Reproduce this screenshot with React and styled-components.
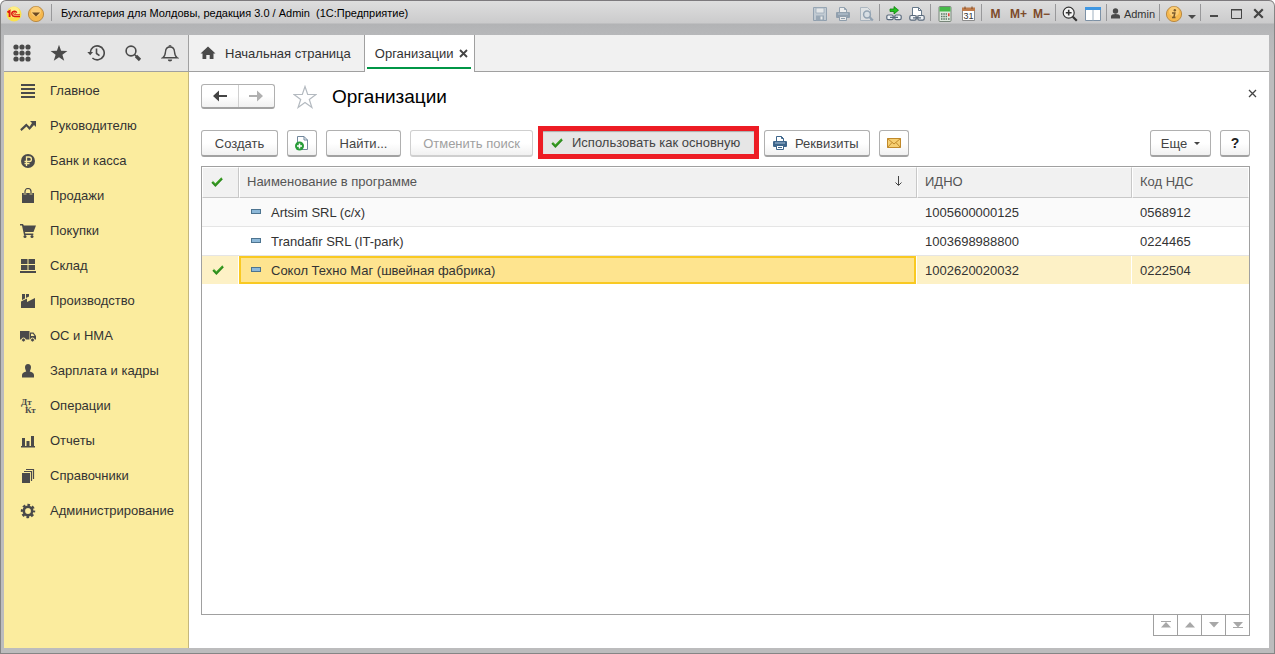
import React, { useState } from 'react'
import styled, { createGlobalStyle, css } from 'styled-components'

const GlobalStyle = createGlobalStyle`
  * { box-sizing: border-box; }
  body {
    margin: 0;
    background: white;
    font-family: "Liberation Sans", Arial, sans-serif;
    font-size: 13px;
    color: #333;
  }
  button {
    font: inherit;
    color: inherit;
    margin: 0;
    padding: 0;
    border: 0;
    background: none;
  }
  svg { display: block; flex: none; }
`

const Window = styled.div`
  min-height: 100vh;
  display: flex;
  flex-direction: column;
  padding: 0 5px 5px 3px;
  border: 1px solid #858585;
  border-top: 1px solid #7d7a7d;
  border-radius: 6px 6px 0 0;
  background: linear-gradient(#dedede, #cbcbcc 22px, #b2b3b5 23px, #b7b8ba 34px, #bcbcbd 60px);
  overflow: hidden;
`

const TitleBar = styled.header`
  height: 34px;
  display: flex;
  align-items: flex-start;
  padding-top: 1px;
`

const Sep = styled.i`
  width: 1px;
  height: 17px;
  margin: 2px;
  background: #98989a;
`

const BarButton = styled.button`
  width: ${ props => props.$w || 23 }px;
  height: 23px;
  display: flex;
  align-items: center;
  justify-content: center;
  gap: 4px;
  opacity: ${ props => props.disabled ? 0.55 : 1 };
  font-size: 11px;
`

const Memory = styled(BarButton)`
  color: #7d4a2a;
  font-size: 12px;
  font-weight: bold;
`

const WindowTitle = styled.h1`
  flex: 1;
  margin: 0 0 0 7px;
  font-size: 11px;
  line-height: 23px;
  font-weight: normal;
  color: #000;
  white-space: pre;
  overflow: hidden;
`

const TopStrip = styled.div`
  height: 37px;
  display: flex;
  background: #f1f1f1;
  border-bottom: 1px solid #a0a0a0;
`

const Tools = styled.div`
  width: 185px;
  display: flex;
  background: #e6e6e6;
  border-right: 1px solid #a0a0a0;
`

const Tool = styled.button`
  flex: 1;
  display: flex;
  align-items: center;
  justify-content: center;
`

const Tab = styled.button`
  display: flex;
  align-items: center;
  gap: 9px;
  padding: 0 13px 0 11px;
  border-right: 1px solid #a0a0a0;
  white-space: nowrap;
  ${ props => props.$active && css`
    height: 37px;
    gap: 6px;
    padding: 0 6px 0 10px;
    background: linear-gradient(#009646, #009646) 2px 32px / calc(100% - 5px) 2px no-repeat white;
  ` }
`

const Body = styled.div`
  flex: 1;
  display: flex;
  background: white;
`

const Sidebar = styled.nav`
  width: 185px;
  padding-top: 1px;
  background: #fbec9e;
  border-right: 1px solid #c5b77c;
`

const Section = styled.a`
  height: 35px;
  display: flex;
  align-items: center;
  gap: 14px;
  padding-left: 16px;
  color: #333;
  text-decoration: none;
  white-space: nowrap;
`

const Main = styled.main`
  flex: 1;
  min-width: 0;
  display: flex;
  flex-direction: column;
  padding: 12px 19px 12px 12px;
`

const PageHead = styled.div`
  height: 25px;
  display: flex;
  align-items: center;
`

const face = css`
  border: 1px solid #b0b0b0;
  border-bottom: 2px solid #a2a2a2;
  border-radius: 3px;
  background: linear-gradient(#fff 50%, #f1f1f1);
`

const NavButtons = styled.div`
  ${ face }
  width: 74px;
  height: 25px;
  display: flex;
  button {
    flex: 1;
    display: flex;
    align-items: center;
    justify-content: center;
  }
  button + button { border-left: 1px solid #d0d0d0; }
`

const Favourite = styled.button`
  margin: 0 15px 0 18px;
`

const PageTitle = styled.h2`
  flex: 1;
  margin: 0;
  font-size: 19px;
  line-height: 25px;
  font-weight: normal;
  color: #000;
`

const ClosePage = styled.button`
  width: 16px;
  height: 16px;
  margin: 0 -10px 6px 0;
  display: flex;
  align-items: center;
  justify-content: center;
`

const Commands = styled.div`
  display: flex;
  align-items: center;
  gap: 9px;
  margin: 21px 0 9px;
`

const Button = styled.button`
  ${ face }
  width: ${ props => props.$w }px;
  height: 27px;
  display: flex;
  align-items: center;
  justify-content: ${ props => props.$start ? 'flex-start' : 'center' };
  gap: 7px;
  padding-left: ${ props => props.$start ? 7 : 0 }px;
  color: #444;
  white-space: nowrap;
  &:disabled {
    color: #a0a0a0;
    border-color: #cfcfcf;
  }
  b {
    font-size: 14px;
    color: #222;
  }
`

const MainButton = styled(Button)`
  align-self: flex-start;
  height: 23px;
  gap: 9px;
  margin: 1px;
  padding-left: 8px;
  border: 0;
  border-radius: 0;
  background: #e6e6e6;
  box-shadow: 0 0 0 5px #ed1c24, inset 0 1px 1px #aaa;
`

const Spacer = styled.div`
  flex: 1;
`

const List = styled.div`
  flex: 1;
  border: 1px solid #a0a0a0;
`

const Table = styled.table`
  width: 100%;
  table-layout: fixed;
  border-collapse: separate;
  border-spacing: 0;
  th, td {
    padding: 0 8px;
    text-align: left;
    font-weight: normal;
    white-space: nowrap;
  }
  th {
    height: 31px;
    color: #555;
    background: #f1f1f1;
    border: 1px solid white;
    border-right: 1px solid #c8c8c8;
    border-bottom: 1px solid #c8c8c8;
    padding: 0 7px 2px;
  }
  th:last-child { border-right-color: white; }
  th:first-child { padding-left: 8px; }
  td:first-child { padding-left: 10px; }
`

const Row = styled.tr`
  td {
    height: 29px;
    background: ${ props => props.$odd ? '#fafafa' : 'white' };
    border-bottom: 1px solid #e5e5e5;
  }
  ${ props => props.$selected && css`
    td {
      background: #fdf1c6;
      background-clip: padding-box;
      border-bottom-color: white;
      border-right: 1px solid white;
    }
    td:last-child { border-right: 0; }
    td:nth-child(2) {
      background: #fee48f;
      background-clip: padding-box;
      box-shadow: inset 0 0 0 2px #f9c922;
    }
  ` }
`

const Cell = styled.div`
  display: flex;
  align-items: center;
  gap: 10px;
  padding-left: 4px;
`

const HeadCell = styled.div`
  display: flex;
  align-items: center;
  justify-content: space-between;
  padding-right: 6px;
`

const Pager = styled.div`
  align-self: flex-end;
  display: flex;
  border: 1px solid #a0a0a0;
  border-top: 0;
  button {
    width: 24px;
    height: 20px;
    display: flex;
    align-items: center;
    justify-content: center;
  }
  button:first-child { width: 23px; }
  button + button { border-left: 1px solid #a0a0a0; }
`

const Svg = ({ size = 16, w, h, children, ...rest }) => (
  <svg width={w || size} height={h || size} viewBox={`0 0 ${w || size} ${h || size}`} fill="#4a4a4a" aria-hidden="true" {...rest}>
    {children}
  </svg>
)

const Check = () => (
  <Svg w={12} h={12} fill="none">
    <path d="M1.2 6 4.4 9.2 11 2.4" stroke="#2c8b1c" strokeWidth="2.4"/>
    <path d="M1.6 5.2 4.4 7.9 10.6 1.8" stroke="#5cc23c" strokeWidth="0.8"/>
  </Svg>
)

const Dash = () => (
  <Svg w={10} h={8}>
    <rect x="0.5" y="1.5" width="9" height="4" fill="#8db8d8" stroke="#4d7490"/>
  </Svg>
)

const Logo = () => (
  <svg width="16" height="16" viewBox="0 0 16 16" aria-hidden="true">
    <circle cx="8" cy="8" r="7.5" fill="#fbe04a"/>
    <circle cx="8" cy="6" r="5.5" fill="#fff3a0" opacity="0.7"/>
    <g fill="none" stroke="#dd1a12">
      <path d="M1.5 6.4 3.6 5v6" strokeWidth="1.9"/>
      <path d="M10.8 6.6A2.7 2.5 0 1 0 8.6 10.4H14" strokeWidth="1.5"/>
      <path d="M9.6 7.6A1 1 0 1 0 8.6 8.7H14" strokeWidth="0.9"/>
    </g>
  </svg>
)

const Round = ({ children }) => (
  <Svg size={18}>
    <circle cx="9" cy="9" r="7.6" fill="#f5b84e" stroke="#b98a45"/>
    <circle cx="9" cy="6.5" r="5" fill="#ffd88e" opacity="0.6"/>
    {children}
  </Svg>
)

const Floppy = () => (
  <Svg>
    <path d="M1.5 1.5h13v13h-13z" fill="#b4c4d2" stroke="#5f7a94"/>
    <path d="M4 2h8v5H4z" fill="#f0f4f7" stroke="#6f8aa2" strokeWidth="0.8"/>
    <path d="M4 9.5h8v5H4z" fill="#6f89a0"/>
    <path d="M8.500 10.500h2v3h-2z" fill="white"/>
  </Svg>
)

const Printer = ({ color = '#3d658b' }) => (
  <Svg>
    <path d="M4.5 7V1.5h5l2 2V7" fill="white" stroke={color}/>
    <path d="M9.5 1.5v2h2" fill="none" stroke={color}/>
    <rect x="1" y="6" width="14" height="6" rx="1" fill={color}/>
    <path d="M3 8h10" stroke="#a9c3da"/>
    <path d="M4.5 10.5h7v4h-7z" fill="white" stroke={color}/>
    <path d="M6 12.5h4" stroke={color}/>
  </Svg>
)

const Preview = () => (
  <Svg>
    <path d="M2.5 1.5h7l3 3v10h-10z" fill="#e6ebef" stroke="#8a9dae"/>
    <circle cx="9" cy="8.5" r="3.4" fill="#dce8f2" stroke="#5f7d99" strokeWidth="1.5"/>
    <path d="m11.5 11 3.3 3.6" stroke="#5f7d99" strokeWidth="2.2"/>
  </Svg>
)

const Chain = ({ y = 9 }) => (
  <g fill="#eef1f4" stroke="#5a6a7c" strokeWidth="1.2">
    <rect x="0.8" y={y} width="6.4" height="4.6" rx="1.4"/>
    <rect x="8.8" y={y} width="6.4" height="4.6" rx="1.4"/>
    <path d={`M4 ${y + 2.3}h8`}/>
  </g>
)

const LinkGo = () => (
  <Svg>
    <Chain/>
    <path d="M4 3h4V.5L12.5 4.2 8 8V5.5H4z" fill="#23c41e" stroke="#11820f" strokeWidth="0.8"/>
  </Svg>
)

const LinkDoc = () => (
  <Svg>
    <path d="M3.5 9V1.5h6l3 3V9" fill="white" stroke="#66788a"/>
    <path d="M9.5 1.5v3h3" fill="none" stroke="#66788a"/>
    <Chain y={9.5}/>
  </Svg>
)

const Calc = () => (
  <Svg>
    <rect x="2" y="0.5" width="12" height="15" rx="1" fill="#dfe9df" stroke="#78867a"/>
    <path d="M2.5 1h11v4.5h-11z" fill="#46b948"/>
    <path d="M4 8h6M4 10.5h6M4 13h6" stroke="#5b7563" strokeWidth="1.5" strokeDasharray="1.5 0.8"/>
    <path d="M11 7.2h1.6v3H11z" fill="#e04638"/>
    <path d="M11 12.2h1.6v1.6H11z" fill="#5b7563"/>
  </Svg>
)

const Calendar = () => (
  <Svg>
    <path d="M2.5 2.5h12v12h-12z" fill="white" stroke="#8c8c8c"/>
    <path d="M2 1.5h13v3.500H2z" fill="#bf7a48"/>
    <path d="M5 .5v2.5M12 .5v2.5" stroke="#7a4825"/>
    <text x="8.5" y="13" fontSize="9" textAnchor="middle" fill="#333">31</text>
  </Svg>
)

const Magnifier = () => (
  <Svg fill="none" stroke="#333">
    <circle cx="6.7" cy="6.7" r="5.5" fill="#f4f4f4" strokeWidth="1.2"/>
    <path d="M3.8 6.7h5.8M6.7 3.8v5.8" strokeWidth="1.6"/>
    <path d="m10.8 10.8 4 4" strokeWidth="2.2"/>
  </Svg>
)

const Panels = () => (
  <Svg>
    <path d="M.5 1.5h15v13H.5z" fill="white" stroke="#7d91a5"/>
    <path d="M0 1h16v3H0z" fill="#3f97e2"/>
    <path d="M8 4v10.5" stroke="#9fb0bf"/>
  </Svg>
)

const User = () => (
  <Svg w={9} h={11}>
    <circle cx="4.5" cy="3" r="2.7"/>
    <path d="M0 10.5V8.3C0 6.8 2 6 4.5 6S9 6.8 9 8.3v2.2z"/>
  </Svg>
)

const Apps = () => (
  <Svg size={18}>
    {[3, 9, 15].map(y => [3, 9, 15].map(x => <circle key={`${x}-${y}`} cx={x} cy={y} r="2.6"/>))}
  </Svg>
)

const Star = () => (
  <Svg size={18}>
    <path d="m9 .8 2.1 5.9 6.3.2-5 3.8 1.8 6L9 13.2l-5.2 3.5 1.800-6-5-3.800 6.300-.2z"/>
  </Svg>
)

const History = () => (
  <Svg size={18} fill="none" stroke="#4a4a4a" strokeWidth="1.6">
    <path d="M3.2 9a7 7 0 1 1 2.2 5"/>
    <path d="M.3 8h5.8L3.2 11.2z" fill="#4a4a4a" stroke="none"/>
    <path d="M9.5 4.5v5l3 2.2"/>
  </Svg>
)

const Search = () => (
  <Svg size={18} fill="none" stroke="#4a4a4a">
    <circle cx="7" cy="7" r="4.9" strokeWidth="1.6"/>
    <path d="m10.8 10.8 2 2" strokeWidth="1.6"/>
    <path d="m12 12 4 4" strokeWidth="3.2"/>
  </Svg>
)

const Bell = () => (
  <Svg size={18} fill="none" stroke="#4a4a4a" strokeWidth="1.4">
    <path d="M1.8 13.7c2.400-1.700 2.500-3.200 2.700-6C4.700 4.600 6.300 3 9 3s4.300 1.600 4.500 4.700c.2 2.800.3 4.300 2.700 6z"/>
    <path d="M8 2.600a1 1 0 0 1 2 0"/>
    <path d="M6.800 15.500h4.400a2.200 2 0 0 1-4.400 0z" fill="#4a4a4a" stroke="none"/>
  </Svg>
)

const Home = () => (
  <Svg>
    <path d="m8 1.5 7.5 7h-2V14H9.7v-4H6.3v4H2.5V8.5h-2z"/>
  </Svg>
)

const CloseIcon = ({ size = 9, width = 1.3 }) => (
  <svg width={size} height={size} viewBox="0 0 9 9" aria-hidden="true">
    <path d="m1 1 7 7M8 1 1 8" stroke="#444" strokeWidth={width}/>
  </svg>
)

const BigStar = () => (
  <Svg size={24} fill="white" stroke="#b4bac0" strokeWidth="1.2">
    <path d="m12 1.5 2.7 8H23l-6.700 5 2.600 8-6.900-4.900-6.900 4.900 2.600-8L1 9.500h8.300z"/>
  </Svg>
)

const Arrow = ({ color, flip }) => (
  <Svg w={14} h={12} fill={color}>
    <path d={flip ? 'M14 6 8 .5V5H0v2h8v4.5z' : 'M0 6 6 .5V5h8v2H6v4.5z'}/>
  </Svg>
)

const NewDoc = () => (
  <Svg>
    <path d="M3.5 1.5H10L13.5 5v9.5h-10z" fill="white" stroke="#71879c"/>
    <path d="M10 1.5V5h3.5" fill="none" stroke="#71879c"/>
    <circle cx="5.500" cy="11" r="4.500" fill="#279c38"/>
    <path d="M3 11h5M5.5 8.5v5" stroke="white" strokeWidth="1.5"/>
  </Svg>
)

const Mail = () => (
  <Svg w={14} h={10}>
    <path d="M.5.5h13v9H.5z" fill="#f6cf72" stroke="#c0892b"/>
    <path d="M.5.5 7 6 13.5.5M.5 9.5l4.5-5M13.5 9.5 9 4.5" fill="none" stroke="#c0892b"/>
  </Svg>
)

const Triangle = ({ up, bar }) => (
  <Svg w={10} h={8} fill="#a8a8a8">
    <path d={up ? 'M5 1 0 6.500h10z' : 'M5 6.500 0 1h10z'}/>
    {bar && <rect x="0" y={up ? 0 : 6} width="10" height="1"/>}
  </Svg>
)

const Caret = () => (
  <Svg w={6} h={3} fill="#444"><path d="M0 0h6L3 3z"/></Svg>
)

const sections = [
  ['Главное', <path d="M1 1h14v2H1zM1 5h14v2H1zM1 9h14v2H1zM1 13h14v2H1z"/>],
  ['Руководителю', <path d="M10 3h6v6l-2-2-4.5 5-3-3.5-5 4.500-1.300-1.700 6.100-5.800 3.200 3.200L12 5z"/>],
  ['Банк и касса', <>
    <circle cx="8" cy="8" r="7"/>
    <path d="M6.5 13V4h2.7a2.2 2.2 0 0 1 0 4.500H4.500M4.500 10.700h5" fill="none" stroke="#fbec9e" strokeWidth="1.3"/>
  </>],
  ['Продажи', <>
    <path d="M2 5h12v10H2z"/>
    <path d="M5 7V4a3 3 0 0 1 6 0v3" fill="none" stroke="#fbec9e" strokeWidth="2.4"/>
    <path d="M5 7V3.500a3 3 0 0 1 6 0V7" fill="none" stroke="#4a4a4a" strokeWidth="1.2"/>
  </>],
  ['Покупки', <>
    <path d="M0 1h3l.8 1.500H16L13.500 9H5l.3 1.500h8V12H4L2 2.500H0z"/>
    <circle cx="5" cy="13.500" r="1.500"/>
    <circle cx="12" cy="13.500" r="1.500"/>
  </>],
  ['Склад', <path d="M1 1h6.500v5H1zM8.500 1H15v5H8.500zM1 7h6.500v5H1zM8.500 7H15v5H8.500zM0 13h16v2H0z"/>],
  ['Производство', <path d="M1 15V8.500L7 5.500V9l8-4v10zM2 1h3v4.500L2 7zM6 1h3v2.500L6 5z"/>],
  ['ОС и НМА', <>
    <path d="M0 3h9.500v8.500H0zM10 4.500h3.500L16 8v3.500h-6z"/>
    <path d="M11 5.700h2L14.500 8H11z" fill="#fbec9e"/>
    <circle cx="3.500" cy="12" r="2" stroke="#fbec9e"/>
    <circle cx="12.500" cy="12" r="2" stroke="#fbec9e"/>
  </>],
  ['Зарплата и кадры', <path d="M8 1c2 0 3 1.300 3 3.200S9.700 8.500 9.700 8.500C12 9.200 14 10 14 12v2.500H2V12c0-2 2-2.800 4.300-3.500 0 0-1.300-2.400-1.300-4.300S6 1 8 1z"/>],
  ['Операции', <g fontFamily="Liberation Serif, serif" fontSize="9" fontWeight="bold">
    <text x="1" y="7">Дт</text>
    <text x="5" y="15">Кт</text>
  </g>],
  ['Отчеты', <path d="M1 13h14v1.500H1zM2 5h3v8H2zM6.500 8h3v5h-3zM11 3h3v10h-3z"/>],
  ['Справочники', <>
    <path d="M2 5h8v10H2z"/>
    <path d="M4 3.500h7.500V13M6 1.500h7.500V11" fill="none" stroke="#4a4a4a" strokeWidth="1.2"/>
  </>],
  ['Администрирование', <>
    <circle cx="8" cy="8" r="4.2" fill="none" stroke="#4a4a4a" strokeWidth="2.6"/>
    <circle cx="8" cy="8" r="6" fill="none" stroke="#4a4a4a" strokeWidth="2.4" strokeDasharray="2.6 2.112" strokeDashoffset="1.3"/>
  </>]
]

const organizations = [
  { name: 'Artsim SRL (с/х)', idno: '1005600000125', vat: '0568912' },
  { name: 'Trandafir SRL (IT-park)', idno: '1003698988800', vat: '0224465' },
  { name: 'Сокол Техно Маг (швейная фабрика)', idno: '1002620020032', vat: '0222504', main: true }
]

export default function App() {
  const [selected, setSelected] = useState(2)
  return (
    <Window>
      <GlobalStyle/>
      <TitleBar>
        <BarButton $w={19} aria-label="1С"><Logo/></BarButton>
        <BarButton $w={26} aria-label="Главное меню">
          <Round><path d="M5 7.5h8l-4 4z" fill="#6b4a24"/></Round>
        </BarButton>
        <Sep/>
        <WindowTitle>Бухгалтерия для Молдовы, редакция 3.0 / Admin  (1С:Предприятие)</WindowTitle>
        <BarButton disabled aria-label="Сохранить"><Floppy/></BarButton>
        <BarButton disabled aria-label="Печать"><Printer color="#5c7790"/></BarButton>
        <BarButton disabled aria-label="Просмотр"><Preview/></BarButton>
        <Sep/>
        <BarButton aria-label="Перейти по ссылке"><LinkGo/></BarButton>
        <BarButton aria-label="Получить ссылку"><LinkDoc/></BarButton>
        <Sep/>
        <BarButton aria-label="Калькулятор"><Calc/></BarButton>
        <BarButton aria-label="Календарь"><Calendar/></BarButton>
        <Sep/>
        <Memory>M</Memory>
        <Memory>M+</Memory>
        <Memory>M−</Memory>
        <Sep/>
        <BarButton aria-label="Масштаб"><Magnifier/></BarButton>
        <BarButton aria-label="Панели"><Panels/></BarButton>
        <Sep/>
        <BarButton $w={48}><User/>Admin</BarButton>
        <Sep/>
        <BarButton aria-label="Справка">
          <Round>
            <path d="M7 8h2.8l-1 4.5h1.7M7 12.5h2" fill="none" stroke="#7a5a2c" strokeWidth="1.5"/>
            <circle cx="9.8" cy="5.3" r="1.2" fill="#7a5a2c"/>
          </Round>
        </BarButton>
        <BarButton $w={13} aria-label="Еще">
          <Svg w={8} h={11}><path d="M0 7h8l-4 4z"/></Svg>
        </BarButton>
        <Sep/>
        <BarButton $w={22} aria-label="Свернуть">
          <Svg w={8} h={8}><path d="M0 5h8v2H0z"/></Svg>
        </BarButton>
        <BarButton $w={22} aria-label="Развернуть">
          <Svg w={11} h={10}><path d="M.5 1h10v8.5H.5zM0 .5h11" fill="none" stroke="#444"/></Svg>
        </BarButton>
        <BarButton $w={22} aria-label="Закрыть"><CloseIcon size={11} width={1.8}/></BarButton>
      </TitleBar>

      <TopStrip>
        <Tools>
          <Tool aria-label="Меню функций"><Apps/></Tool>
          <Tool aria-label="Избранное"><Star/></Tool>
          <Tool aria-label="История"><History/></Tool>
          <Tool aria-label="Поиск"><Search/></Tool>
          <Tool aria-label="Оповещения"><Bell/></Tool>
        </Tools>
        <Tab><Home/>Начальная страница</Tab>
        <Tab $active>Организации<CloseIcon width={1.8}/></Tab>
      </TopStrip>

      <Body>
        <Sidebar>
          {sections.map(([title, icon]) => (
            <Section key={title} href="#"><Svg>{icon}</Svg>{title}</Section>
          ))}
        </Sidebar>
        <Main>
          <PageHead>
            <NavButtons>
              <button aria-label="Назад"><Arrow color="#444"/></button>
              <button aria-label="Вперед"><Arrow color="#b0b0b0" flip/></button>
            </NavButtons>
            <Favourite aria-label="Добавить в избранное"><BigStar/></Favourite>
            <PageTitle>Организации</PageTitle>
            <ClosePage aria-label="Закрыть"><CloseIcon/></ClosePage>
          </PageHead>

          <Commands>
            <Button $w={77}>Создать</Button>
            <Button $w={30} aria-label="Создать копированием"><NewDoc/></Button>
            <Button $w={75}>Найти...</Button>
            <Button $w={123} disabled>Отменить поиск</Button>
            <MainButton $w={211} $start><Check/>Использовать как основную</MainButton>
            <Button $w={106} $start><Printer/>Реквизиты</Button>
            <Button $w={30} aria-label="Письмо"><Mail/></Button>
            <Spacer/>
            <Button $w={61}>Еще<Caret/></Button>
            <Button $w={30}><b>?</b></Button>
          </Commands>

          <List>
            <Table>
              <colgroup>
                <col style={{ width: 37 }}/>
                <col/>
                <col style={{ width: 215 }}/>
                <col style={{ width: 117 }}/>
              </colgroup>
              <thead>
                <tr>
                  <th aria-label="Основная"><Check/></th>
                  <th>
                    <HeadCell>
                      Наименование в программе
                      <Svg w={9} h={11} fill="none" stroke="#444"><path d="M4.5 0v9M1.5 6.5l3 3 3-3"/></Svg>
                    </HeadCell>
                  </th>
                  <th>ИДНО</th>
                  <th>Код НДС</th>
                </tr>
              </thead>
              <tbody>
                {organizations.map((org, i) => (
                  <Row key={org.idno} $selected={i === selected} $odd={i % 2 === 0} onClick={() => setSelected(i)}>
                    <td>{org.main && <Check/>}</td>
                    <td><Cell><Dash/>{org.name}</Cell></td>
                    <td>{org.idno}</td>
                    <td>{org.vat}</td>
                  </Row>
                ))}
              </tbody>
            </Table>
          </List>
          <Pager>
            <button aria-label="В начало"><Triangle up bar/></button>
            <button aria-label="Вверх"><Triangle up/></button>
            <button aria-label="Вниз"><Triangle/></button>
            <button aria-label="В конец"><Triangle bar/></button>
          </Pager>
        </Main>
      </Body>
    </Window>
  )
}
